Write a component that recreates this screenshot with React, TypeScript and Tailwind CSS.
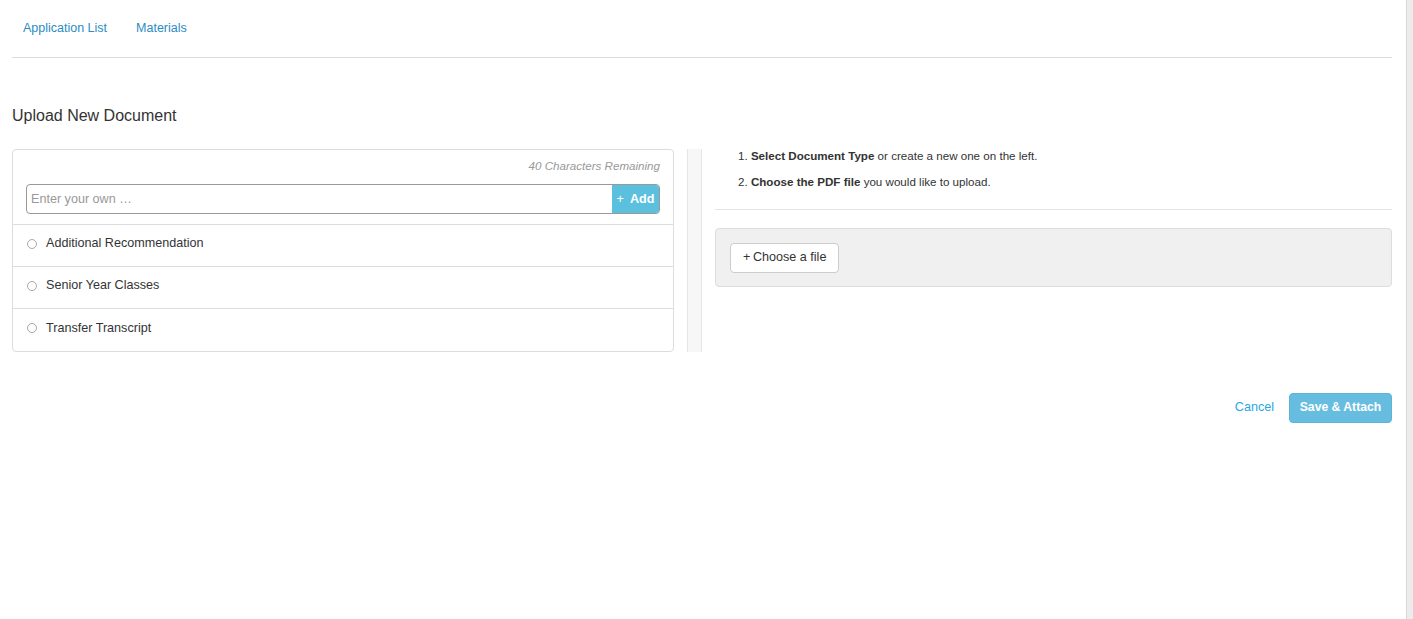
import React, { useState } from 'react';

const docTypes = ['Additional Recommendation', 'Senior Year Classes', 'Transfer Transcript'];

const App = () => {
  const [selected, setSelected] = useState<string | null>(null);
  const [value, setValue] = useState('');

  return (
    <div className="flex min-h-[619px] bg-white font-['Liberation_Sans',Arial,sans-serif] text-[#333]">
      <div className="flex-1 pl-3 pr-[14px]">
        <nav className="flex h-[58px] items-center gap-[29px] border-b border-[#ddd] pl-[11px] text-[12.5px] text-[#2b8cc4]">
          <a href="#" className="hover:underline">Application List</a>
          <a href="#" className="hover:underline">Materials</a>
        </nav>

        <h2 className="mt-[47px] text-[16px] leading-[22px] text-[#333]">Upload New Document</h2>

        <div className="mt-[22px] flex">
          <div className="w-[662px] rounded border border-[#ddd]">
            <div className="border-b border-[#ddd] px-[13px] pt-[7px] pb-[10px]">
              <p className="text-right text-[11.6px] italic leading-[17px] text-[#999]">40 Characters Remaining</p>
              <div className="mt-[10px] flex h-[30px] rounded border border-[#999]">
                <input
                  value={value}
                  onChange={(e) => setValue(e.target.value.slice(0, 40))}
                  placeholder="Enter your own …"
                  className="min-w-0 flex-1 rounded-l px-[4px] text-[12.6px] text-[#333] outline-none placeholder:text-[#999]"
                />
                <button className="flex w-[47px] items-center justify-center gap-[6px] rounded-r-[3px] bg-[#5bc0de] text-[12.6px] font-bold text-white">
                  <span className="font-normal">+</span>Add
                </button>
              </div>
            </div>
            {docTypes.map((d, i) => (
              <label
                key={d}
                className={`flex h-[42px] cursor-pointer items-center gap-[9px] px-[14px] pb-[4px] text-[12.6px] ${i < docTypes.length - 1 ? 'border-b border-[#ddd]' : ''}`}
              >
                <span className="flex h-[10px] w-[10px] items-center justify-center rounded-full border border-[#aaa] bg-white">
                  {selected === d && <span className="h-[4px] w-[4px] rounded-full bg-[#555]" />}
                </span>
                <input type="radio" name="doc" className="hidden" checked={selected === d} onChange={() => setSelected(d)} />
                {d}
              </label>
            ))}
          </div>

          <div className="ml-[13px] w-[15px] border-x border-[#e5e5e5] bg-[#f7f7f7]" />

          <div className="ml-[13px] flex-1">
            <ol className="border-b border-[#e5e5e5] pl-[23px] pb-[19px] text-[11.6px] leading-[17px] text-[#333]">
              <li className="-mt-[2px]">1. <b>Select Document Type</b> or create a new one on the left.</li>
              <li className="mt-[9px]">2. <b>Choose the PDF file</b> you would like to upload.</li>
            </ol>
            <div className="mt-[18px] flex h-[59px] items-center rounded border border-[#ddd] bg-[#f0f0f0] px-[14px]">
              <button className="flex h-[30px] items-center rounded border border-[#ccc] bg-white px-[12px] pb-[1px] text-[12.6px] text-[#333]">
                +&thinsp;Choose a file
              </button>
            </div>
          </div>
        </div>

        <div className="mt-[41px] flex items-center justify-end gap-[15px]">
          <a href="#" className="pb-[2px] text-[12.6px] text-[#29a8e0]">Cancel</a>
          <button className="h-[30px] w-[103px] rounded border border-[#5bb4d6] bg-[#67bde0] pb-[2px] text-[12.2px] font-bold text-white">
            Save &amp; Attach
          </button>
        </div>
      </div>
      <div className="w-[7px] border-l border-[#d8d8d8] bg-[#ececec]" />
    </div>
  );
};

export default App;
